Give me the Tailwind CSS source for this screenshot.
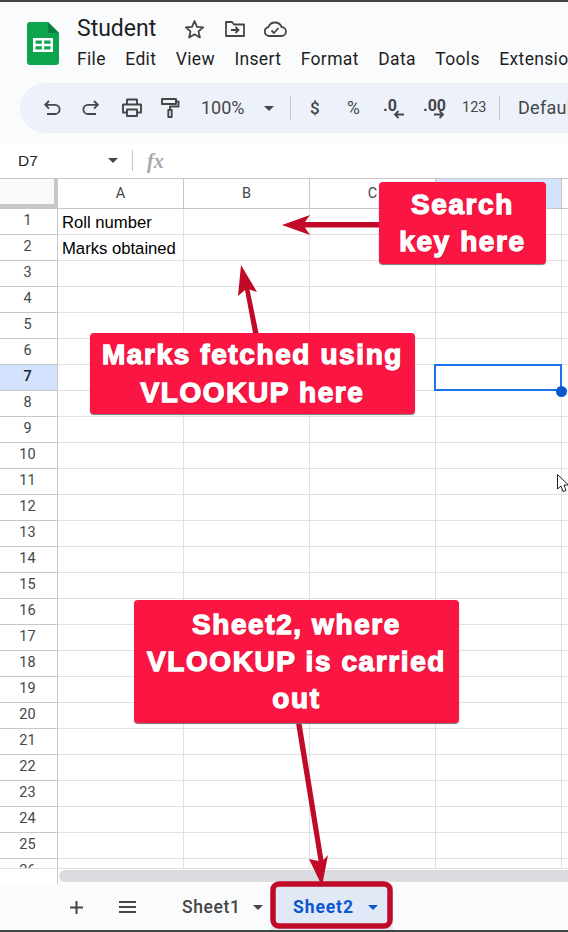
<!DOCTYPE html>
<html lang="en">
<head>
    <meta charset="UTF-8">
    <meta name="viewport" content="width=device-width, initial-scale=1.0">
    <title>Student - Google Sheets</title>
    <script src="https://cdn.jsdelivr.net/npm/@tailwindcss/browser@4"></script>
</head>
<body class="bg-white">
<div class="relative w-[568px] h-[932px] overflow-hidden flex flex-col font-['Roboto',sans-serif] text-[#444746]">

    <!-- Docs header -->
    <header class="h-[143px] shrink-0 bg-[#f9fbfd] border-t-2 border-[#444444] overflow-hidden">
        <div class="flex h-[81px] pl-[27px]">
            <svg class="mt-[20px] shrink-0" width="32" height="43" viewBox="0 0 32 43">
                <path d="M3 0H21L32 11V40a3 3 0 0 1-3 3H3a3 3 0 0 1-3-3V3a3 3 0 0 1 3-3z" fill="#0ca54e"/>
                <path d="M21 0L32 11H21z" fill="#0b8043"/>
                <path d="M6 16H26V30H6z M8.500 18.500V21.800H14.800V18.500z M17.200 18.500V21.800H23.500V18.500z M8.500 24.200V27.500H14.800V24.200z M17.200 24.200V27.500H23.500V24.200z" fill="#fff" fill-rule="evenodd"/>
            </svg>
            <div class="ml-[18px] min-w-0">
                <div class="flex items-center h-[24px] mt-[15px]">
                    <span class="w-[107px] text-[23px] leading-[24px] text-[#1f1f1f]">Student</span>
                    <svg width="21" height="20" viewBox="0 0 21 20" fill="none" stroke="#444746" stroke-width="1.800" stroke-linejoin="round"><path d="M10.500 2L13 7.800L19.200 8.300L14.500 12.400L15.900 18.500L10.500 15.300L5.100 18.500L6.500 12.400L1.800 8.300L8 7.800z"/></svg>
                    <svg class="ml-[19px]" width="22" height="18" viewBox="0 0 22 18" fill="none" stroke="#444746" stroke-width="1.800" stroke-linejoin="round"><path d="M2 2H8L10 4.500H20V16H2z"/><path d="M7 10H14M11.500 7L14.500 10L11.500 13" stroke-linejoin="miter"/></svg>
                    <svg class="ml-[17px]" width="24" height="18" viewBox="0 0 24 18" fill="none" stroke="#444746" stroke-width="1.800" stroke-linejoin="round"><path d="M6 16a4.500 4.500 0 0 1-.6-8.900A7 7 0 0 1 18.500 7a4.500 4.500 0 0 1 0 9z"/><path d="M8.500 10.500L11 13L15.500 8"/></svg>
                </div>
                <nav class="flex gap-[19.500px] mt-[6px] text-[17.500px] tracking-[0.33px] leading-[24px] text-[#1f1f1f] whitespace-nowrap">
                    <span>File</span><span>Edit</span><span>View</span><span>Insert</span><span>Format</span><span>Data</span><span>Tools</span><span>Extensions</span>
                </nav>
            </div>
        </div>

        <!-- Toolbar -->
        <div class="ml-[20px] h-[50px] rounded-l-full bg-[#edf2fa] flex items-center pl-[22px] whitespace-nowrap overflow-hidden *:shrink-0">
            <svg width="20" height="20" viewBox="0 0 20 20" fill="none" stroke="#444746" stroke-width="1.800"><path d="M7 3L3.200 6.800L7 10.600"/><path d="M3.500 6.800H13a4.500 4.500 0 0 1 0 9.200H5"/></svg>
            <svg class="ml-[19px]" width="20" height="20" viewBox="0 0 20 20" fill="none" stroke="#444746" stroke-width="1.800"><path d="M13 3L16.800 6.800L13 10.600"/><path d="M16.500 6.800H7a4.500 4.500 0 0 0 0 9.200H15"/></svg>
            <svg class="ml-[21px]" width="20" height="20" viewBox="0 0 20 20" fill="none" stroke="#444746" stroke-width="1.900" stroke-linejoin="round"><path d="M5 6V1.500H15V6"/><path d="M5 14.500H1V6.500H19V14.500H15"/><path d="M5 11.500H15V18H5z"/></svg>
            <svg class="ml-[18px]" width="20" height="20" viewBox="0 0 20 20" fill="none" stroke="#444746" stroke-width="1.900" stroke-linejoin="round"><path d="M2 1H16V6H2z"/><path d="M16 3.500H18.500V8.500H10V12"/><path d="M8.300 12H11.700V19H8.300z"/></svg>
            <span class="ml-[21px] w-[63px] text-[18px] leading-[24px]">100%</span>
            <span class="w-0 h-0 border-x-[5px] border-x-transparent border-t-[5px] border-t-[#444746]"></span>
            <span class="ml-[16px] w-px h-[24px] bg-[#c7c7c7]"></span>
            <span class="ml-[19px] w-[37px] text-[17px] font-medium leading-[24px]">$</span>
            <span class="w-[36px] text-[17.500px] leading-[24px]">%</span>
            <span class="relative w-[40px] h-[24px] text-[16px] font-bold leading-[20px]">.0
                <svg class="absolute left-[10px] top-[14px]" width="12" height="9" viewBox="0 0 12 9" fill="none" stroke="#444746" stroke-width="1.800"><path d="M11 4.500H2M5.500 1L2 4.500L5.500 8"/></svg>
            </span>
            <span class="relative w-[39px] h-[24px] text-[16px] font-bold leading-[20px]">.00
                <svg class="absolute left-[10px] top-[14px]" width="12" height="9" viewBox="0 0 12 9" fill="none" stroke="#444746" stroke-width="1.800"><path d="M1 4.500H10M6.500 1L10 4.500L6.500 8"/></svg>
            </span>
            <span class="w-[37px] text-[14.500px] leading-[24px]">123</span>
            <span class="w-px h-[24px] bg-[#c7c7c7]"></span>
            <span class="ml-[18px] text-[18px] tracking-[0.3px] leading-[24px]">Default</span>
        </div>
    </header>

    <!-- Formula bar -->
    <div class="h-[35px] shrink-0 bg-white flex items-center pl-[18px]">
        <span class="w-[90px] font-['Liberation_Sans',sans-serif] text-[15.500px] text-[#1f1f1f]">D7</span>
        <span class="w-0 h-0 border-x-[5px] border-x-transparent border-t-[5px] border-t-[#444746]"></span>
        <span class="ml-[14px] w-px h-[21px] bg-[#c7c7c7]"></span>
        <span class="ml-[14px] font-['Liberation_Serif',serif] italic font-bold text-[20px] leading-none text-[#a8a8a8]">fx</span>
    </div>

    <!-- Column headers -->
    <div class="h-[31px] shrink-0 flex border-y border-[#c7c7c7] text-[14.500px] leading-[29px] text-center">
        <div class="w-[58px] h-[29px] shrink-0 bg-[#f8f9fa] border-r-[4px] border-b-[4px] border-[#c7c7c7]"></div>
        <div class="w-[126px] shrink-0 border-r border-[#c7c7c7]">A</div>
        <div class="w-[126px] shrink-0 border-r border-[#c7c7c7]">B</div>
        <div class="w-[126px] shrink-0 border-r border-[#c7c7c7]">C</div>
        <div class="w-[126px] shrink-0 border-r border-[#c7c7c7] bg-[#d3e3fd]">D</div>
        <div class="grow"></div>
    </div>

    <!-- Grid rows, filled in below -->
    <div id="rows" class="h-[659px] shrink-0 overflow-hidden"></div>

    <!-- Horizontal scrollbar -->
    <div class="h-[16px] shrink-0 flex border-t border-[#e1e1e1] bg-white">
        <div class="w-[58px] shrink-0 border-r border-[#c7c7c7]"></div>
        <div class="grow h-[12px] mt-[1px] ml-px rounded-l-full bg-[#dadce0]"></div>
    </div>

    <!-- Sheet tabs -->
    <div class="grow bg-[#f9fbfd] border-b-2 border-[#3f4a45] flex items-center whitespace-nowrap">
        <svg class="ml-[68px]" width="17" height="17" viewBox="0 0 17 17" stroke="#444746" stroke-width="2"><path d="M8.500 2V15M2 8.500H15"/></svg>
        <svg class="ml-[33px]" width="19" height="14" viewBox="0 0 19 14" stroke="#444746" stroke-width="2"><path d="M1 2H18M1 7H18M1 12H18"/></svg>
        <span class="ml-[45px] w-[71px] text-[17.500px] font-medium tracking-[0.6px] leading-[24px]">Sheet1</span>
        <span class="w-0 h-0 border-x-[5px] border-x-transparent border-t-[5px] border-t-[#444746]"></span>
        <div class="ml-[8px] w-[122px] h-[46px] flex items-center pl-[22px] bg-[#e1e9f7] text-[#0b57d0]">
            <span class="w-[75px] text-[17.500px] font-bold tracking-[0.9px] leading-[24px]">Sheet2</span>
            <span class="w-0 h-0 border-x-[5px] border-x-transparent border-t-[5px] border-t-[#0b57d0]"></span>
        </div>
    </div>

    <!-- Selected cell D7 -->
    <div class="absolute left-[434px] top-[364px] w-[128px] h-[27px] border-2 border-[#1a73e8]"></div>
    <div class="absolute left-[556px] top-[386px] w-[11px] h-[11px] rounded-full bg-[#0b57d0]"></div>

    <!-- Mouse pointer -->
    <svg class="absolute left-[557px] top-[474px]" width="12" height="20" viewBox="0 0 12 20" fill="#fff" stroke="#222" stroke-width="1"><path d="M.500 .500V15L4 12L6 17.500L9 16.500L7 11H11.500z"/></svg>

    <!-- Annotation arrows -->
    <svg class="absolute inset-0" width="568" height="932" viewBox="0 0 568 932" fill="#c00a27">
        <path d="M282 225L310 215L305 222H380V227.500H305L310 235z"/>
        <path d="M241 265L257 292L249.500 289.500L258.500 333H253L245 290L238 296z"/>
        <path d="M322 886L309 859L318.500 861L296 723H301.500L323.500 860L328 855z"/>
        <rect x="273" y="884" width="117" height="42" rx="6" fill="none" stroke="#c00a27" stroke-width="5.500"/>
    </svg>

    <!-- Callouts -->
    <div class="absolute left-[379px] top-[182px] w-[167px] h-[82px] rounded-[4px] bg-[#fb1542] shadow-[0_1px_1px_#777] flex items-center justify-center text-center font-['Liberation_Sans',sans-serif] font-bold text-[28px] leading-[37px] tracking-[1.600px] text-white [-webkit-text-stroke:1.300px_white] [text-shadow:1px_1px_1px_rgba(0,0,0,0.35)]">Search<br>key here</div>
    <div class="absolute left-[90px] top-[333px] w-[325px] h-[81px] rounded-[4px] bg-[#fb1542] shadow-[0_1px_1px_#777] flex items-center justify-center text-center font-['Liberation_Sans',sans-serif] font-bold text-[28px] leading-[38px] tracking-[1.600px] text-white [-webkit-text-stroke:1.300px_white] [text-shadow:1px_1px_1px_rgba(0,0,0,0.35)]">Marks fetched using<br>VLOOKUP here</div>
    <div class="absolute left-[134px] top-[600px] w-[325px] h-[123px] rounded-[4px] bg-[#fb1542] shadow-[0_1px_1px_#777] flex items-center justify-center text-center font-['Liberation_Sans',sans-serif] font-bold text-[28px] leading-[37px] tracking-[1.600px] text-white [-webkit-text-stroke:1.300px_white] [text-shadow:1px_1px_1px_rgba(0,0,0,0.35)]">Sheet2, where<br>VLOOKUP is carried<br>out</div>
</div>

<script>
    // 26 rows, the last one is cut off by the scrollbar
    var labels = { 1: "Roll number", 2: "Marks obtained" };
    var html = "";
    for (var i = 1; i <= 26; i++) {
        var head = i === 7
            ? "w-[58px] shrink-0 border-r border-b border-[#c7c7c7] bg-[#d3e3fd] text-[#1f1f1f] font-medium text-center text-[14.500px] pr-[2px] leading-[24px]"
            : "w-[58px] shrink-0 border-r border-b border-[#c7c7c7] text-center text-[14.500px] pr-[2px] leading-[24px]";
        var cell = "w-[126px] shrink-0 border-r border-b border-[#e1e1e1]";
        html += '<div class="flex h-[26px]"><div class="' + head + '">' + i + '</div>'
            + '<div class="' + cell + ' pl-[4px] font-[\'Liberation_Sans\',sans-serif] text-[16.670px] leading-[27px] text-black whitespace-nowrap">' + (labels[i] || "") + '</div>'
            + '<div class="' + cell + '"></div><div class="' + cell + '"></div><div class="' + cell + '"></div>'
            + '<div class="grow border-b border-[#e1e1e1]"></div></div>';
    }
    document.getElementById("rows").innerHTML = html;
</script>
</body>
</html>
